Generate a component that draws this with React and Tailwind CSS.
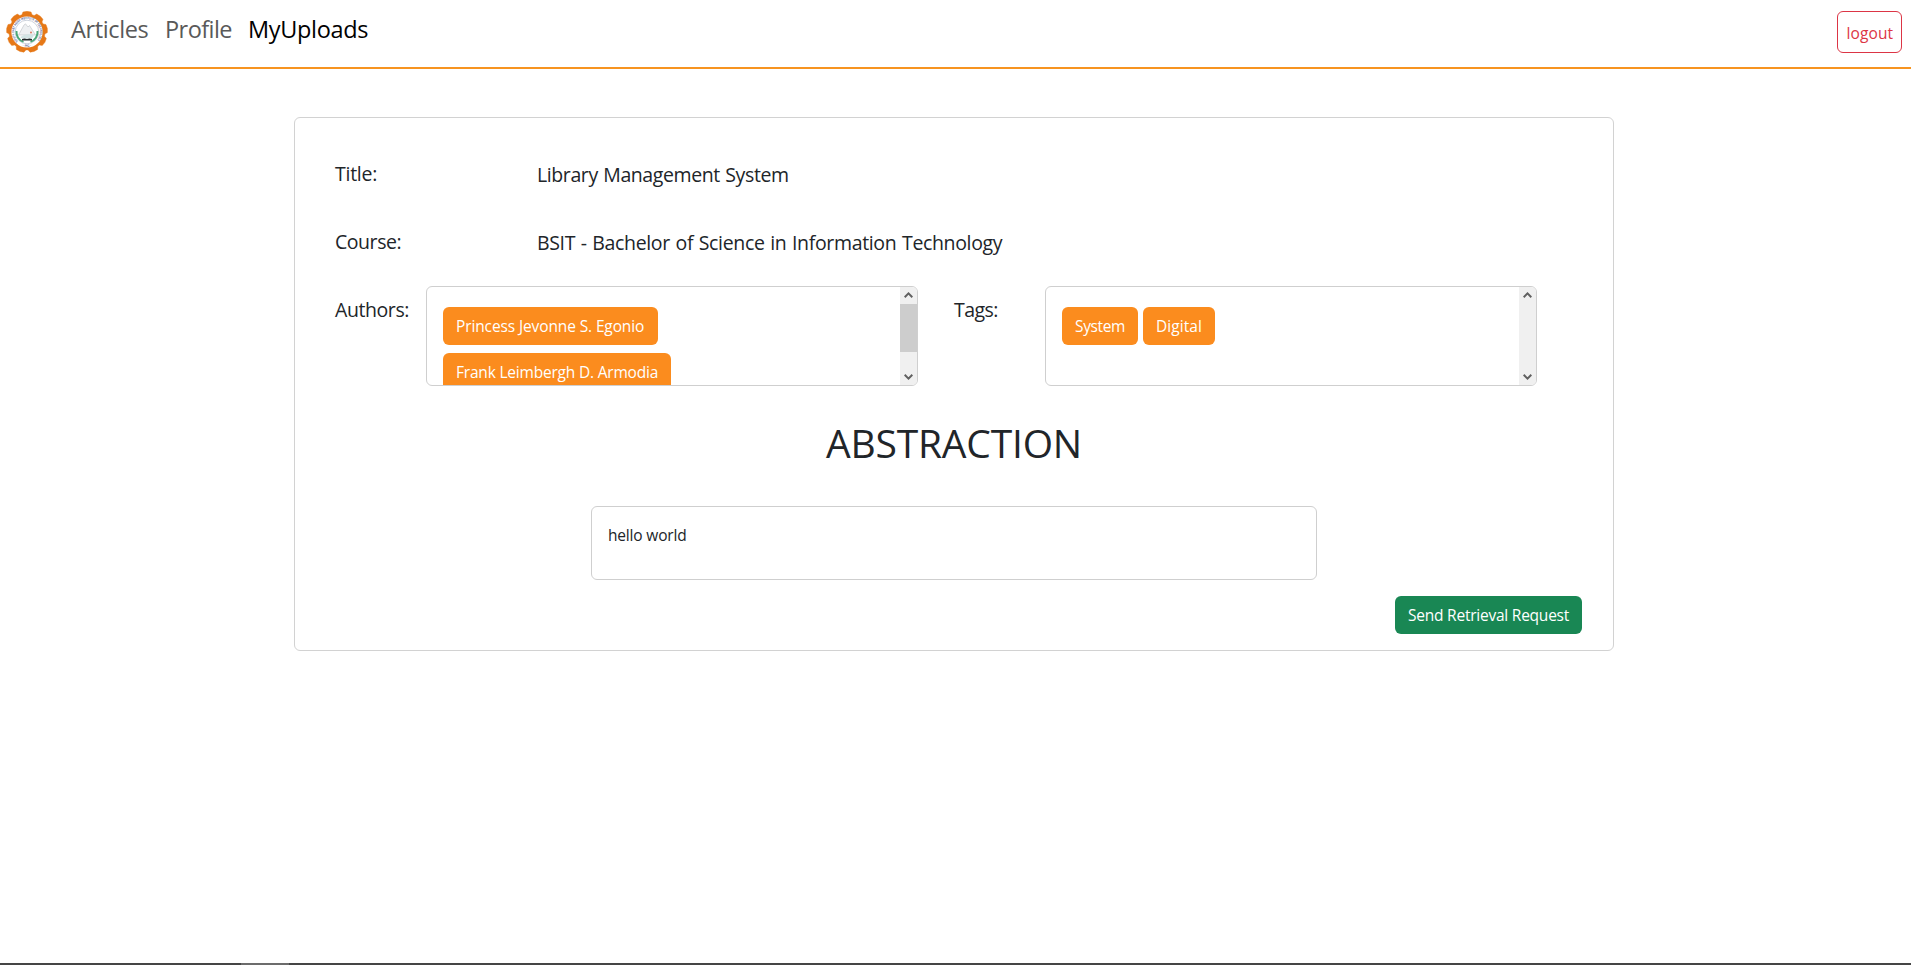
const gearPoints = Array.from({ length: 9 }, (_, i) => {
  const mid = -90 + i * 40;
  return [
    [-16.5, 18],
    [-11.5, 20.4],
    [0, 20.7],
    [11.5, 20.4],
    [16.5, 18],
  ]
    .map(([offset, radius]) => {
      const angle = ((mid + offset) * Math.PI) / 180;
      return `${(21 + radius * Math.cos(angle)).toFixed(2)},${(21 + radius * Math.sin(angle)).toFixed(2)}`;
    })
    .join(' ');
}).join(' ');

function Logo() {
  return (
    <svg viewBox="0 0 42 42" className="h-[42px] w-[42px]">
      <polygon points={gearPoints} fill="#e67817" stroke="#e67817" strokeWidth="0.4" strokeLinejoin="round" />
      <circle cx="21" cy="21" r="15.6" fill="#fff" />
      <path id="ring" d="M11.9 30.1 A12.9 12.9 0 1 1 30.1 30.1" fill="none" />
      <path id="ringLow" d="M12 32.6 A14.7 14.7 0 0 0 30 32.6" fill="none" />
      <text fontSize="3.3" fontWeight="700" fill="#53578c" fontFamily="Liberation Sans, sans-serif">
        <textPath href="#ring" textLength="59" lengthAdjust="spacingAndGlyphs">SOUTH EAST ASIAN INSTITUTE OF TECHNOLOGY</textPath>
      </text>
      <text fontSize="3" fontWeight="700" fill="#53578c" fontFamily="Liberation Sans, sans-serif">
        <textPath href="#ringLow" startOffset="50%" textAnchor="middle">· INC ·</textPath>
      </text>
      <circle cx="21" cy="21" r="11.8" fill="#fff" stroke="#a9b3c4" strokeWidth="0.6" />
      <path d="M10.5 20 A10.5 10.5 0 0 0 17.5 30.9" fill="none" stroke="#4aa777" strokeWidth="1.9" />
      <path d="M31.5 20 A10.5 10.5 0 0 1 24.5 30.9" fill="none" stroke="#4aa777" strokeWidth="1.9" />
      <path d="M12.5 24 L18 14 L19.5 12.8 L22 16 L23.5 14.5 L29.5 24 Z" fill="#eef0f2" stroke="#b0b5bb" strokeWidth="0.5" />
      <path d="M14 26 Q21 21.5 28 24.5 L26 27.5 H16 Z" fill="#d3e4e4" />
      <circle cx="25" cy="21.5" r="1" fill="#df7c62" />
      <path d="M16 28 Q18.5 27 21 28 Q23.5 27 26 28 V29.6 H16 Z" fill="#23282b" />
    </svg>
  );
}

function Scrollbar({ thumb }) {
  return (
    <div className="flex w-[17px] shrink-0 flex-col justify-between bg-[#f0f0f0]">
      <div className="flex h-[17px] items-start justify-center pt-[5px]">
        <svg viewBox="0 0 9 6" className="h-1.5 w-[9px]"><path d="M0.7 5.2 L4.5 1.4 L8.3 5.2" fill="none" stroke="#606060" strokeWidth="2" /></svg>
      </div>
      {thumb && <div className="mb-auto h-12 bg-[#cdcdcd]" />}
      <div className="flex h-[17px] items-start justify-center pt-1.5">
        <svg viewBox="0 0 9 6" className="h-1.5 w-[9px]"><path d="M0.7 0.8 L4.5 4.6 L8.3 0.8" fill="none" stroke="#606060" strokeWidth="2" /></svg>
      </div>
    </div>
  );
}

function Chip({ className, children }) {
  return (
    <button className={`h-[38px] shrink-0 rounded-md bg-[#fb8c1e] pl-[13px] text-left text-[15.5px] leading-[38px] whitespace-nowrap text-white ${className}`}>
      {children}
    </button>
  );
}

export default function App() {
  return (
    <div className="flex h-screen flex-col overflow-hidden bg-white font-['Open_Sans',sans-serif] text-[#212529]">
      <header className="flex h-[69px] shrink-0 items-start border-b-2 border-[#f79420] pl-[5.5px] pr-[9px] pt-[11px]">
        <Logo />
        <nav className="flex pl-[23.5px] text-[23.5px] leading-9 whitespace-nowrap text-[#595959]">
          <a className="w-[94px] tracking-[-0.38px]">Articles</a>
          <a className="w-[83px] tracking-[-0.55px]">Profile</a>
          <a className="tracking-[-0.33px] text-black">MyUploads</a>
        </nav>
        <button className="ml-auto h-[42px] w-[65px] rounded-md border border-[#dc3545] pl-[8.5px] pt-[3px] text-left text-[15.5px] tracking-[0.1px] text-[#dc3545]">
          logout
        </button>
      </header>

      <main className="mt-12 ml-[294px] flex h-[534px] w-[1320px] shrink-0 flex-col rounded-md border border-[#d2d2d2] pl-10 pr-[31px]">
        <section className="mt-[41px] flex h-[68px] shrink-0 text-[19.5px] leading-[30px] whitespace-nowrap">
          <h2 className="w-[202px] tracking-[-0.25px]">Title:</h2>
          <p className="pt-px tracking-[-0.4px] [word-spacing:0.8px]">Library Management System</p>
        </section>
        <section className="flex h-[59px] shrink-0 text-[19.5px] leading-[30px] whitespace-nowrap">
          <h2 className="w-[202px] tracking-[-0.45px]">Course:</h2>
          <p className="pt-px tracking-[-0.34px] [word-spacing:0.9px]">BSIT - Bachelor of Science in Information Technology</p>
        </section>
        <section className="flex h-[100px] shrink-0 whitespace-nowrap">
          <h2 className="w-[91px] pt-[9px] text-[19.5px] leading-[30px] tracking-[-0.42px]">Authors:</h2>
          <div className="flex w-[492px] overflow-hidden rounded-md border border-[#cfcfcf]">
            <div className="flex grow flex-col items-start gap-2 overflow-hidden pl-4 pt-5">
              <Chip className="w-[215px] tracking-[-0.12px]">Princess Jevonne S. Egonio</Chip>
              <Chip className="w-[228px] tracking-[-0.2px]">Frank Leimbergh D. Armodia</Chip>
            </div>
            <Scrollbar thumb />
          </div>
          <h2 className="ml-9 w-[91px] pt-[9px] text-[19.5px] leading-[30px] tracking-[-0.55px]">Tags:</h2>
          <div className="flex w-[492px] overflow-hidden rounded-md border border-[#cfcfcf]">
            <div className="flex grow items-start gap-[5px] pl-4 pt-5">
              <Chip className="w-[76px] tracking-[-0.37px]">System</Chip>
              <Chip className="w-[72px] tracking-[0.06px]">Digital</Chip>
            </div>
            <Scrollbar />
          </div>
        </section>
        <h1 className="mt-[33px] h-[87px] shrink-0 pr-[9px] text-center text-[39px] leading-[48px] tracking-[-0.2px]">ABSTRACTION</h1>
        <section className="ml-[256px] h-[74px] w-[726px] shrink-0 rounded-md border border-[#cfcfcf] pl-4 pt-4 text-[15.5px] leading-6 tracking-[-0.18px]">
          hello world
        </section>
        <button className="mt-4 h-[38px] w-[187px] shrink-0 self-end rounded-md bg-[#198754] pl-[13px] text-left text-[15.5px] leading-[38px] tracking-[-0.23px] whitespace-nowrap text-white">
          Send Retrieval Request
        </button>
      </main>

      <footer className="mt-auto flex h-0.5 shrink-0 bg-[#454545]">
        <div className="ml-[241px] h-full w-12 bg-[#6c6c6c]" />
      </footer>
    </div>
  );
}
